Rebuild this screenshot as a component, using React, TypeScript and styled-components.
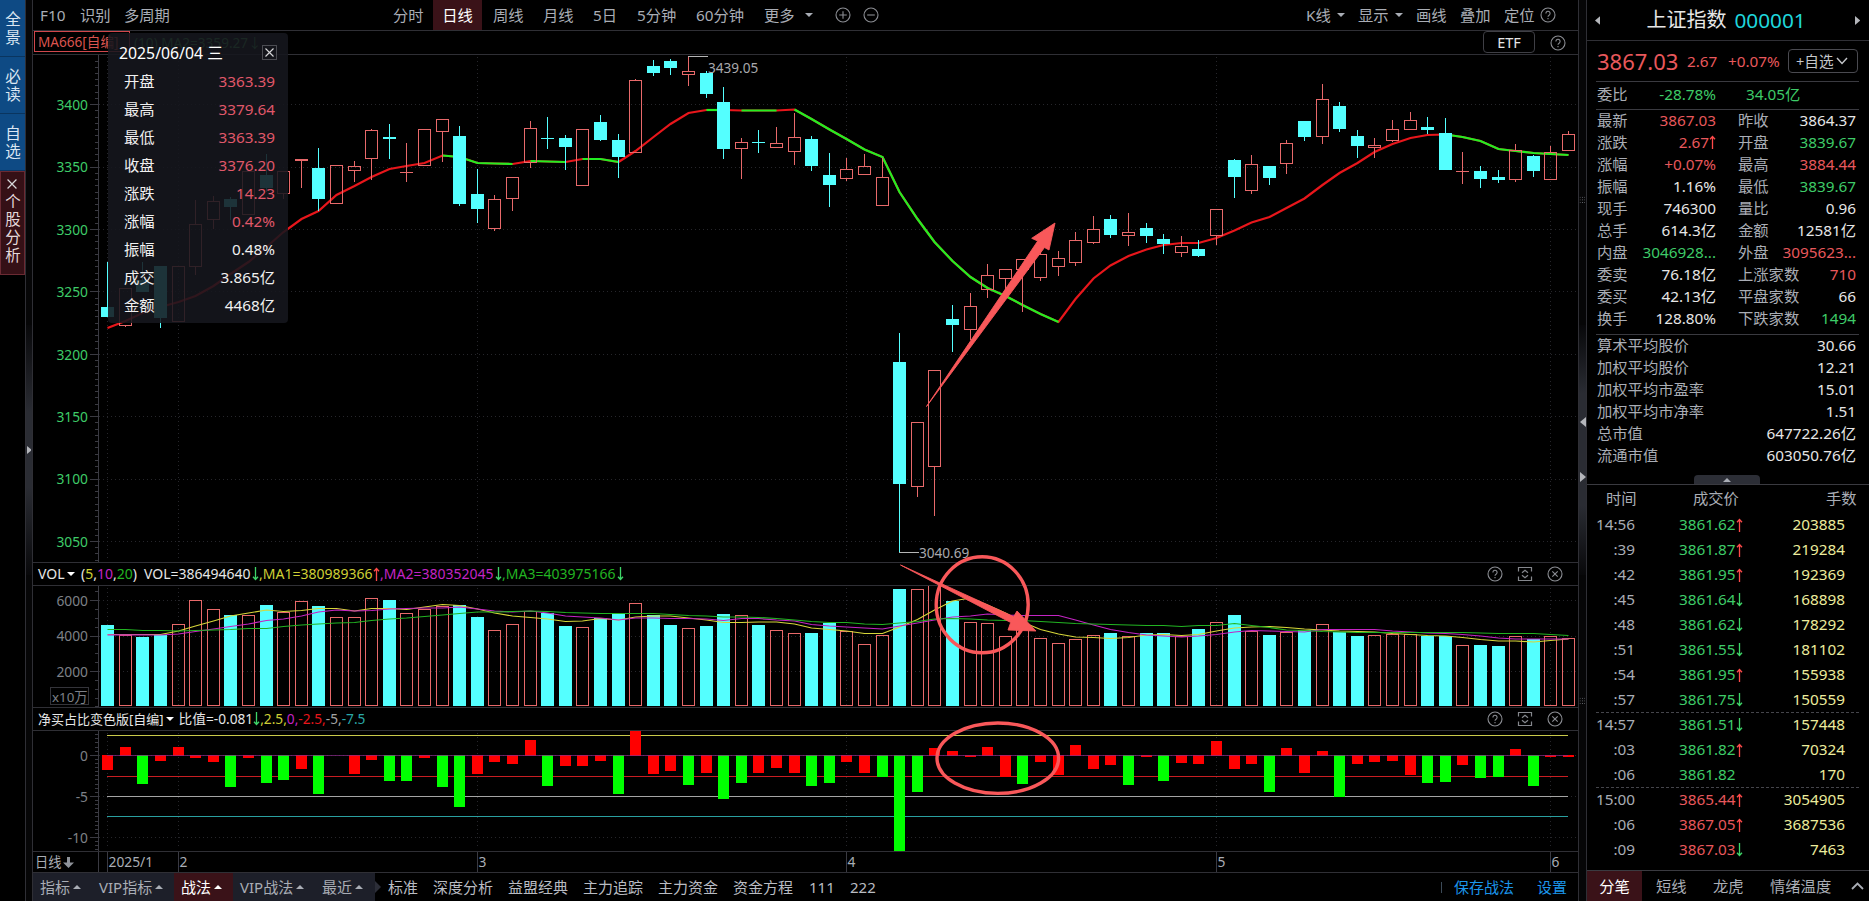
import type { ReactNode } from 'react';
import styled, { createGlobalStyle, css } from 'styled-components';

const colors = {
  line: '#2f2f35',
  muted: '#a9adb5',
  text: '#e6e6e6',
  red: '#e8585c',
  green: '#3ecb68',
  cyan: '#54ffff',
  candleRed: '#e8696a',
  tick: '#3a3a42',
  dot: '#26262b',
  yellow: '#ecec9c',
  activeTab: '#3a1218',
  mark: '#f9585a',
};

const GlobalStyle = createGlobalStyle`
  * {
    box-sizing: border-box;
  }

  body {
    margin: 0;
    background: #000;
    color: ${colors.text};
    font-family: 'Noto Sans', 'Noto Sans CJK SC', sans-serif;
    font-size: 15.3px;
    line-height: 20px;
    overflow: hidden;
  }

  svg {
    display: block;
    flex: none;
  }
`;

type Bar = [top: number, bottom: number, high: number, low: number, up: 0 | 1];

// body top, body bottom, wick top, wick bottom, rising
const candles: Bar[] = [
  [307, 317, 262, 317, 0], [288, 326, 288, 327, 1], [280, 292, 262, 292, 0], [266, 318, 266, 328, 0],
  [266, 322, 266, 322, 1], [224, 267, 200, 275, 1], [201, 220, 196, 229, 1], [199, 207, 197, 220, 0],
  [171, 215, 171, 215, 1], [175, 188, 154, 192, 0], [171, 194, 171, 199, 1], [159, 161, 159, 188, 1],
  [168, 199, 148, 211, 0], [165, 204, 165, 204, 1], [166, 171, 161, 182, 1], [130, 159, 129, 180, 1],
  [137, 139, 124, 159, 0], [172, 173, 143, 182, 1], [129, 166, 129, 166, 1], [119, 132, 119, 162, 1],
  [136, 204, 126, 206, 0], [194, 209, 169, 223, 0], [199, 229, 195, 231, 1], [177, 199, 177, 211, 1],
  [128, 163, 121, 168, 1], [138, 139, 117, 149, 0], [138, 147, 135, 170, 0], [129, 186, 129, 186, 1],
  [122, 140, 115, 141, 0], [140, 157, 134, 178, 0], [80, 153, 79, 153, 1], [66, 73, 60, 76, 0],
  [61, 68, 59, 75, 0], [71, 75, 56, 86, 1], [73, 94, 71, 98, 0], [102, 149, 87, 159, 0],
  [142, 149, 138, 179, 1], [142, 143, 130, 153, 0], [143, 148, 127, 148, 1], [137, 152, 113, 165, 1],
  [139, 166, 136, 171, 0], [175, 185, 153, 207, 0], [169, 179, 158, 181, 1], [166, 175, 154, 175, 1],
  [177, 206, 158, 206, 1], [362, 484, 333, 552, 0], [422, 487, 422, 497, 1], [370, 467, 370, 516, 1],
  [319, 325, 305, 352, 0], [306, 330, 293, 340, 1], [275, 290, 264, 298, 1], [269, 279, 269, 291, 1],
  [259, 270, 259, 312, 1], [254, 278, 247, 281, 1], [258, 267, 251, 276, 1], [240, 263, 232, 266, 1],
  [229, 243, 216, 244, 1], [219, 235, 215, 238, 0], [232, 236, 213, 246, 1], [228, 236, 223, 243, 0],
  [239, 244, 234, 254, 0], [246, 253, 236, 257, 1], [249, 256, 240, 257, 0], [209, 236, 209, 245, 1],
  [160, 177, 159, 198, 0], [164, 191, 155, 194, 1], [166, 178, 166, 185, 0], [143, 164, 140, 174, 1],
  [121, 137, 121, 141, 0], [99, 137, 84, 144, 1], [106, 129, 102, 132, 0], [136, 146, 130, 158, 0],
  [145, 148, 138, 158, 1], [129, 141, 120, 142, 1], [120, 130, 112, 130, 1], [127, 130, 117, 134, 0],
  [133, 170, 118, 170, 0], [171, 172, 152, 184, 1], [171, 179, 166, 188, 0], [177, 180, 170, 183, 0],
  [150, 180, 144, 182, 1], [156, 171, 155, 177, 0], [152, 180, 146, 180, 1], [134, 151, 131, 151, 1],
];

const maLine = [
  328, 321, 313, 307, 302, 296, 286, 274, 262, 247, 232, 219, 211, 195, 186, 177, 169, 166, 163, 155.5,
  157, 163, 163.5, 164, 161, 161.5, 162, 159, 159, 162, 151, 137, 124, 113, 110, 110, 110.5, 110.5, 110.5, 109.5,
  119, 129.5, 139, 149.5, 157, 192, 219, 242, 261, 277, 288, 296, 305, 314, 322, 299, 278.5, 265.5, 256, 249.5,
  245, 243, 243, 238, 230.5, 222.5, 217, 208, 198.5, 185, 173, 163, 152, 144, 138, 135, 134.5, 137, 141, 149,
  151, 153, 154, 155,
];

// [from, to] index ranges where the average is falling
const maFalling: [number, number][] = [
  [19, 23], [24, 26], [27, 29], [34, 35], [36, 38], [39, 54], [76, 83],
];

const volumeTops = [
  625, 635, 637, 635, 624, 600, 609, 615, 615, 605, 612, 601, 606, 617, 617, 598, 600, 613, 609, 606,
  605, 617, 630, 624, 611, 613, 626, 627, 618, 613, 603, 615, 625, 628, 626, 614, 615, 625, 630, 633,
  633, 623, 631, 644, 635, 589, 589, 585, 601, 622, 623, 636, 628, 638, 643, 639, 635, 633, 636, 633,
  633, 636, 629, 622, 615, 631, 635, 632, 630, 624, 632, 636, 635, 634, 634, 636, 636, 645, 645, 646,
  636, 639, 636, 638,
];

const volMa5 = [
  634.5, 634.5, 634.5, 634.5, 631, 626, 621, 616, 613, 610, 611.5, 610.5, 608.5, 608.5, 611, 608.5, 608.5, 609.5, 607, 604.5,
  605.5, 609, 613, 616, 617.5, 619, 621.5, 621, 618.5, 620, 617, 616, 616, 618, 620, 622.5, 622.5, 622, 622, 624,
  628, 629.5, 631, 633.5, 633.5, 627, 619.5, 610, 601, 598, 605, 613, 622, 629.5, 634, 637, 637.5, 638.5, 637.5, 635,
  634.5, 635.5, 634.5, 631, 628, 627, 626.5, 627.5, 629, 630, 631, 631.5, 632, 633.5, 634.5, 635.5, 636, 637.5, 639.5, 641,
  641, 642, 640.5, 639,
];

const volMa10 = [
  634.8, 634.8, 634.8, 635, 634, 631.5, 629, 626.5, 624, 620.5, 619, 616, 612, 610, 611, 610.5, 609, 608.5, 608, 608,
  607, 609, 611, 612, 611, 613, 616, 617, 618, 620, 618, 618, 618.5, 618.5, 619, 620.5, 618.5, 618.5, 620, 621,
  624.5, 626, 627, 628, 629, 626, 623, 620, 617, 616, 614, 615, 615.5, 615.5, 615.5, 620, 625, 629.5, 632.5, 635,
  636, 637, 636, 634.5, 632, 630.5, 631, 631.5, 632, 629.5, 629.5, 629.5, 629.5, 631, 632, 633, 633.5, 634.5, 636, 638,
  639, 639, 639, 639,
];

const volMa20 = [
  629.5, 629.5, 630.5, 630.5, 631, 630.5, 630, 629.5, 628.5, 628.5, 626.5, 625, 624, 623, 622.5, 620.5, 619, 618, 616.5, 615,
  613.5, 612, 612, 611.5, 611, 611.5, 612.5, 613, 613.5, 613.5, 613.5, 613.5, 614.5, 615.5, 616, 617, 617, 617.5, 618.5, 620,
  621.5, 622.5, 622.5, 624, 624.5, 623, 621.5, 619, 618.5, 619, 620, 620.5, 620.5, 621.5, 622.5, 623.5, 624, 624.5, 625, 625.5,
  625.5, 626.5, 625.5, 625.5, 623.5, 625.5, 627.5, 630, 630.5, 631.5, 632, 632.5, 632.5, 632.5, 632.5, 632.5, 632.5, 632.5, 633, 633.5,
  633.5, 633.5, 634.5, 635.5,
];

const ratioEnds = [
  770, 747, 784, 761, 747, 758, 762, 787, 758, 783, 780, 769, 794, 755, 774, 760, 781, 781, 758, 787,
  807, 774, 762, 764, 740, 786, 766, 766, 761, 794, 730, 774, 771, 785, 773, 799, 783, 773, 768, 773,
  786, 783, 762, 773, 777, 851, 792, 748, 751, 757, 747, 777, 784, 762, 775, 745, 769, 765, 785, 757,
  781, 763, 764, 741, 769, 764, 792, 748, 773, 751, 797, 764, 762, 761, 775, 783, 782, 765, 778, 777,
  749, 786, 757, 757,
];

const ratioGreen = new Set([
  2, 7, 9, 10, 12, 16, 17, 19, 20, 25, 29, 33, 35, 36, 40, 41, 44, 45, 46, 52, 58, 60, 66, 70, 75, 76, 78, 79, 81,
]);

const months = [
  { index: 0, label: '2025/1' },
  { index: 4, label: '2' },
  { index: 21, label: '3' },
  { index: 42, label: '4' },
  { index: 63, label: '5' },
  { index: 82, label: '6' },
];

const CHART_LEFT = 33;
const CHART_WIDTH = 1545;
const AXIS_X = 98;

const barX = (i: number) => Math.floor(107.65 + 17.6 * i);

const toPoints = (ys: number[], from = 0, to = ys.length - 1) =>
  ys
    .slice(from, to + 1)
    .map((y, k) => `${barX(from + k) + 0.5},${y}`)
    .join(' ');

const Screen = styled.div`
  position: relative;
  display: flex;
  width: 1869px;
  height: 901px;
  overflow: hidden;
  background: #000;
`;

const SideNav = styled.nav`
  width: 25px;
  flex: none;
`;

const SideItem = styled.div<{ $danger?: boolean }>`
  display: flex;
  flex-direction: column;
  align-items: center;
  justify-content: center;
  gap: 4px;
  height: 57px;
  padding: 2px 2px 0 0;
  font-size: 15.5px;
  background: #0e4a84;
  border-bottom: 1px solid #0a355f;
  color: #dbe6f2;

  ${({ $danger }) =>
    $danger &&
    css`
      height: 104px;
      padding: 0 2px 2px 0;
      background: #351016;
      border: 1px solid #6b2a33;
      color: #e4d8da;
    `}
`;

const VerticalText = styled.span`
  writing-mode: vertical-rl;
  text-orientation: upright;
  letter-spacing: 2.5px;
  line-height: 23px;
  white-space: nowrap;
`;

const Splitter = styled.div<{ $right?: boolean }>`
  display: flex;
  flex-direction: column;
  align-items: center;
  width: ${({ $right }) => ($right ? 9 : 8)}px;
  flex: none;
  border-left: 1px solid ${colors.line};
  border-right: 1px solid ${colors.line};
  background: #060607;
`;

const SplitGrip = styled.div<{ $height: number; $mt?: number; $pt: number; $fade: 'up' | 'down' | 'both' }>`
  width: 100%;
  height: ${({ $height }) => $height}px;
  margin-top: ${({ $mt = 0 }) => $mt}px;
  padding-top: ${({ $pt }) => $pt}px;
  background: ${({ $fade }) => {
    if ($fade === 'both') return 'linear-gradient(#08080a, #2a2c33 35%, #2a2c33 65%, #08080a)';
    return $fade === 'up' ? 'linear-gradient(#08080a, #2a2c33 55%)' : 'linear-gradient(#2a2c33 45%, #08080a)';
  }};

  svg {
    margin: 0 auto;
  }
`;

const DragDots = styled.i<{ $mt: number; $mb: number }>`
  width: 7px;
  height: 8px;
  flex: none;
  margin: ${({ $mt }) => $mt}px 0 ${({ $mb }) => $mb}px;
  background: radial-gradient(#6a6c72 35%, transparent 45%) 0 0 / 2.3px 2.6px;
`;

const ChartColumn = styled.main`
  display: flex;
  flex-direction: column;
  width: ${CHART_WIDTH}px;
  flex: none;
`;

const Toolbar = styled.div`
  display: flex;
  align-items: center;
  height: 31px;
  border-bottom: 1px solid ${colors.line};
  color: ${colors.muted};
`;

const Item = styled.span<{ $ml?: number; $w?: number; $color?: string }>`
  flex: none;
  margin-left: ${({ $ml = 0 }) => $ml}px;
  width: ${({ $w }) => ($w ? `${$w}px` : 'auto')};
  color: ${({ $color }) => $color ?? 'inherit'};
  white-space: nowrap;
`;

const PeriodTab = styled.span`
  width: 49px;
  height: 30px;
  margin-left: 10px;
  flex: none;
  line-height: 30px;
  text-align: center;
  background: ${colors.activeTab};
  color: #fff;
`;

const Caret = styled.i<{ $up?: boolean; $ml?: number; $color?: string }>`
  width: 0;
  height: 0;
  flex: none;
  margin-left: ${({ $ml = 0 }) => $ml}px;
  border: 4px solid transparent;
  ${({ $up, $color = '#a9adb5' }) =>
    $up
      ? `border-top: 0; border-bottom-color: ${$color};`
      : `border-bottom: 0; border-top-color: ${$color};`}
`;

const IconSlot = styled.span<{ $ml: number }>`
  display: flex;
  flex: none;
  margin-left: ${({ $ml }) => $ml}px;
`;

const IndicatorBar = styled.div`
  display: flex;
  align-items: center;
  height: 24px;
  border-bottom: 1px solid ${colors.line};
  font-size: 13.6px;
`;

const IndicatorName = styled.div`
  width: 96px;
  height: 21px;
  margin: 0 0 2px 1px;
  padding-left: 3px;
  border: 1px solid #d0474c;
  color: #d9544f;
  line-height: 20px;
  flex: none;
  white-space: nowrap;
`;

const EtfButton = styled.button`
  width: 52px;
  height: 22px;
  margin-left: auto;
  margin-bottom: 1px;
  padding: 0;
  border: 1px solid #3f3f45;
  border-radius: 4px;
  background: #000;
  color: #e6e6e6;
  font: inherit;
  font-size: 14.5px;
  line-height: 18px;
`;

const PanelHeader = styled.div<{ $size?: number }>`
  display: flex;
  align-items: center;
  height: 23px;
  padding-left: 5px;
  border-bottom: 1px solid ${colors.line};
  font-size: ${({ $size = 14 }) => $size}px;
`;

const ScriptName = styled.span`
  flex: none;
  font-size: 13px;
  white-space: nowrap;
`;

const PanelIcons = styled.div`
  display: flex;
  gap: 14px;
  margin: 0 15px 0 auto;
`;

const Plot = styled.div`
  border-bottom: 1px solid ${colors.line};
`;

const BottomBar = styled.div`
  display: flex;
  align-items: center;
  height: 28px;
  font-size: 15px;
  color: #b9bcc2;
`;

const MenuGroup = styled.div`
  display: flex;
  align-items: center;
  width: 342px;
  height: 100%;
  flex: none;
  background: #1d1f29;
`;

const MenuTab = styled.div<{ $w: number; $active?: boolean }>`
  display: flex;
  align-items: center;
  height: 100%;
  width: ${({ $w }) => $w}px;
  padding-left: 7px;
  gap: 3px;
  flex: none;
  white-space: nowrap;
  color: ${({ $active }) => ($active ? '#fff' : colors.muted)};
  background: ${({ $active }) => ($active ? colors.activeTab : 'transparent')};
`;

const Divider = styled.i`
  width: 1px;
  height: 11px;
  margin-left: auto;
  background: #3c4a58;
`;

const QuotePanel = styled.aside`
  display: flex;
  flex-direction: column;
  flex: 1;
  min-width: 0;
`;

const QuoteTitle = styled.div`
  display: flex;
  align-items: center;
  height: 41px;
  padding: 0 9px 0 8px;
  border-bottom: 1px solid ${colors.line};
  font-size: 20px;
`;

const QuoteName = styled.span`
  margin-left: 46px;
  width: 88px;
  color: #e6e6e6;
  white-space: nowrap;
`;

const QuoteCode = styled.span`
  flex: 1;
  margin-top: -1px;
  font-size: 20.8px;
  color: #1fd6dc;
`;

const Section = styled.div<{ $h: number; $pt?: number; $last?: boolean }>`
  height: ${({ $h }) => $h}px;
  margin: 0 10px 0 9px;
  padding-top: ${({ $pt = 0 }) => $pt}px;
  border-bottom: ${({ $last }) => ($last ? 0 : 1)}px solid #3a3a40;
`;

const PriceRow = styled(Section)`
  display: flex;
  align-items: center;
  padding-left: 1px;
  color: ${colors.red};
`;

const LastPrice = styled.span`
  width: 90px;
  font-size: 22px;
`;

const AddButton = styled.button`
  display: flex;
  align-items: center;
  gap: 2px;
  width: 70px;
  height: 24px;
  margin-left: auto;
  margin-right: 1px;
  padding: 0 0 0 7px;
  border: 1px solid #4a4a50;
  border-radius: 4px;
  background: #000;
  color: #c4c6ca;
  font: inherit;
  font-size: 14.6px;
  white-space: nowrap;
`;

const StatRow = styled.div`
  display: grid;
  grid-template-columns: 119px 22px 118px;
  height: 22px;
  padding-left: 1px;
  line-height: 20px;
`;

const StatCell = styled.div<{ $color?: string }>`
  display: flex;
  justify-content: space-between;
  white-space: nowrap;
  color: ${({ $color }) => $color ?? colors.text};
`;

const Value = styled.span`
  display: flex;
  align-items: center;
  height: 20px;
`;

const Label = styled.span`
  color: ${colors.muted};
`;

const SummaryRow = styled.div`
  display: flex;
  justify-content: space-between;
  width: 260px;
  height: 22px;
  padding-left: 1px;
  line-height: 20px;
`;

const Collapse = styled.div`
  display: flex;
  justify-content: center;
  height: 18px;
  padding: 8px 0 0;
  border-bottom: 1px solid #3a3a40;
`;

const CollapseTab = styled.div`
  display: flex;
  align-items: center;
  justify-content: center;
  width: 66px;
  margin-left: -2px;
  border-radius: 4px 4px 0 0;
  background: #2c2e36;
`;

const TickHead = styled.div`
  display: flex;
  height: 28px;
  line-height: 26px;
  padding-right: 14px;
  color: ${colors.muted};
`;

const TickRow = styled.div<{ $dashed?: boolean }>`
  display: grid;
  grid-template-columns: 39px 44px 57px 10px 99px;
  height: 25px;
  line-height: 22px;
  margin: 0 10px 0 9px;
  white-space: nowrap;
  border-bottom: 1px ${({ $dashed }) => ($dashed ? 'dashed #45454b' : 'solid transparent')};
`;

const TickCell = styled.span<{ $color: string; $right?: boolean }>`
  color: ${({ $color }) => $color};
  text-align: ${({ $right }) => ($right ? 'right' : 'left')};
`;

const ArrowCell = styled.span`
  display: flex;
  align-items: center;
`;

const QuoteTabs = styled.div`
  display: flex;
  align-items: center;
  height: 31px;
  margin-top: auto;
  border-top: 1px solid #3a3a40;
  color: ${colors.muted};
`;

const ActiveQuoteTab = styled.span`
  width: 55px;
  height: 100%;
  line-height: 30px;
  text-align: center;
  background: ${colors.activeTab};
  color: #fff;
`;

const Tooltip = styled.div`
  position: absolute;
  left: 108px;
  top: 33px;
  width: 180px;
  height: 290px;
  padding: 6px 13px 0 11px;
  border-radius: 4px;
  background: rgba(22, 23, 30, 0.88);
  color: #f0f0f0;
`;

const TooltipTitle = styled.div`
  display: flex;
  align-items: center;
  justify-content: space-between;
  height: 28px;
  margin-right: -2px;
  padding-bottom: 1px;
  font-size: 15.8px;
  color: #fff;
`;

const TooltipClose = styled.span`
  display: flex;
  align-items: center;
  justify-content: center;
  width: 15px;
  height: 15px;
  border: 1px solid #4b4c52;
`;

const TooltipRow = styled.div<{ $color?: string }>`
  display: flex;
  justify-content: space-between;
  height: 28px;
  padding-left: 5px;
  line-height: 28px;
  color: ${({ $color }) => $color ?? '#f0f0f0'};
`;

const TooltipLabel = styled.span`
  color: #f0f0f0;
`;

const Marks = styled.svg`
  position: absolute;
  left: 0;
  top: 0;
  pointer-events: none;
`;

const HelpIcon = () => (
  <svg width="16" height="16" viewBox="0 0 16 16" fill="none" stroke="#8b8d93" strokeWidth="1.1">
    <circle cx="8" cy="8" r="7" />
    <path d="M5.9 6.4a2.1 2.1 0 1 1 3.2 1.8c-.8.5-1.1.8-1.1 1.6M8 11v1.3" />
  </svg>
);

const RoundIcon = ({ d }: { d: string }) => (
  <svg width="16" height="16" viewBox="0 0 16 16" fill="none" stroke="#8b8d93" strokeWidth="1.1">
    <circle cx="8" cy="8" r="7" />
    <path d={d} />
  </svg>
);

const ResizeIcon = () => (
  <svg width="16" height="16" viewBox="0 0 16 16" fill="none" stroke="#85878d" strokeWidth="1.2">
    <path d="M1.5 5.5v-4h13v4M1.5 10.5v4h13v-4" />
    <path d="M5 6.8 8 4.3l3 2.5M5 9.2l3 2.5 3-2.5" />
  </svg>
);

const CrossIcon = ({ size = 9, color = '#d8d8da' }: { size?: number; color?: string }) => (
  <svg width={size} height={size} viewBox="0 0 9 9" stroke={color} strokeWidth="1.1">
    <path d="M.5.5l8 8M8.5.5l-8 8" />
  </svg>
);

const SideArrow = ({ flip, size = 8 }: { flip?: boolean; size?: number }) => (
  <svg width={size * 0.6} height={size} viewBox="0 0 6 10" fill="#b4b6bb">
    <path d={flip ? 'M6 0v10L0 5z' : 'M0 0v10l6-5z'} />
  </svg>
);

interface CanvasProps {
  top: number;
  height: number;
  children: ReactNode;
}

// Every panel shares the same x scale, shifted to its own vertical band
const Canvas = ({ top, height, children }: CanvasProps) => (
  <svg
    width={CHART_WIDTH}
    height={height}
    viewBox={`${CHART_LEFT} ${top} ${CHART_WIDTH} ${height}`}
    fontFamily="'Noto Sans', 'Noto Sans CJK SC', sans-serif"
    fontSize="13.8"
  >
    {children}
  </svg>
);

interface AxisProps {
  top: number;
  height: number;
  labels: { y: number; text: string }[];
  step: number;
  color: string;
}

const Axis = ({ top, height, labels, step, color }: AxisProps) => {
  const minor: number[] = [];
  for (let y = labels[0].y - step; y > top + 2; y -= step) minor.push(y);
  for (let y = labels[0].y; y < top + height; y += step) minor.push(y);

  return (
    <g>
      <g shapeRendering="crispEdges" stroke={colors.tick}>
        <path d={`M${AXIS_X + 0.5} ${top}v${height}`} />
        {minor.map((y) => (
          <path key={y} d={`M95 ${Math.floor(y) + 0.5}h3`} />
        ))}
        {labels.map(({ y }) => (
          <path key={y} d={`M90 ${Math.floor(y) + 0.5}h8`} />
        ))}
      </g>
      <g shapeRendering="crispEdges" stroke={colors.dot} strokeDasharray="1 3">
        {labels.map(({ y }) => (
          <path key={y} d={`M99 ${Math.floor(y) + 0.5}H1576`} />
        ))}
        {months.map(({ index }) => (
          <path key={index} d={`M${barX(index) + 0.5} ${top + 2}v${height - 4}`} />
        ))}
      </g>
      {labels.map(({ y, text }) => (
        <text key={text} x="88" y={y + 5.3} textAnchor="end" fill={color}>
          {text}
        </text>
      ))}
    </g>
  );
};

const priceLabels = [3400, 3350, 3300, 3250, 3200, 3150, 3100, 3050].map((value, i) => ({
  y: 104.7 + i * 62.4,
  text: String(value),
}));

const PriceChart = () => (
  <Canvas top={55} height={507}>
    <Axis top={55} height={507} labels={priceLabels} step={6.24} color={colors.green} />
    <g fill="none" strokeWidth="2.2">
      <polyline points={toPoints(maLine)} stroke="#e8161b" />
      {maFalling.map(([from, to]) => (
        <polyline key={from} points={toPoints(maLine, from, to)} stroke="#22ee22" />
      ))}
    </g>
    <g shapeRendering="crispEdges">
      {candles.map(([top, bottom, high, low, up], i) => {
        const x = barX(i);
        const color = up ? colors.candleRed : colors.cyan;
        return (
          <g key={i} fill={color}>
            {top > high && <rect x={x} y={high} width="1" height={top - high} />}
            {low > bottom && <rect x={x} y={bottom} width="1" height={low - bottom} />}
            {up && bottom - top > 2 ? (
              <rect x={x - 5.5} y={top + 0.5} width="12" height={bottom - top - 1} fill="none" stroke={color} />
            ) : (
              <rect x={x - 6} y={top} width="13" height={bottom - top} />
            )}
          </g>
        );
      })}
      <path d="M688 56.5h20M899 552.5h20" stroke="#b5b5b5" />
    </g>
    <g fill="#a8a8ac" fontSize="13.6">
      <text x="708" y="73.2">3439.05</text>
      <text x="919" y="558">3040.69</text>
    </g>
  </Canvas>
);

const volumeLabels = [
  { y: 600.7, text: '6000' },
  { y: 636, text: '4000' },
  { y: 671.5, text: '2000' },
];

const VolumeChart = () => (
  <Canvas top={586} height={121}>
    <Axis top={586} height={121} labels={volumeLabels} step={8.85} color="#7d8087" />
    <rect x="50.5" y="687.5" width="38" height="17" fill="none" stroke="#34343a" />
    <text x="52" y="701.5" fill="#7d8087" fontSize="13.3">x10万</text>
    <g shapeRendering="crispEdges">
      {volumeTops.map((top, i) =>
        candles[i][4] ? (
          <rect key={i} x={barX(i) - 5.5} y={top + 0.5} width="12" height={705 - top} fill="none" stroke={colors.candleRed} />
        ) : (
          <rect key={i} x={barX(i) - 6} y={top} width="13" height={706 - top} fill={colors.cyan} />
        ),
      )}
    </g>
    <g fill="none" strokeWidth="1.2">
      <polyline points={toPoints(volMa5)} stroke="#d6d639" />
      <polyline points={toPoints(volMa10)} stroke="#c424c4" />
      <polyline points={toPoints(volMa20)} stroke="#22b422" />
    </g>
  </Canvas>
);

const ratioLabels = [
  { y: 755.3, text: '0' },
  { y: 796.8, text: '-5' },
  { y: 837.5, text: '-10' },
];

const RatioChart = () => (
  <Canvas top={731} height={120}>
    <Axis top={731} height={120} labels={ratioLabels} step={4.11} color="#7d8087" />
    <g shapeRendering="crispEdges">
      <path d="M107 735.5H1568" stroke="#c9c94a" />
      <path d="M107 776.5H1568" stroke="#c81e22" />
      <path d="M107 796.5H1568" stroke="#a4a4a4" />
      <path d="M107 816.5H1568" stroke="#2a9f9f" />
      {ratioEnds.map((end, i) => (
        <rect
          key={i}
          x={barX(i) - 5}
          y={Math.min(end, 755)}
          width="11"
          height={end < 755 ? 756 - end : end - 755}
          fill={ratioGreen.has(i) ? '#00ff00' : '#ff0000'}
        />
      ))}
      <path d="M107 755.5H1568" stroke="#8c2c8c" strokeOpacity="0.7" />
    </g>
  </Canvas>
);

const DateAxis = () => (
  <Canvas top={852} height={20}>
    <path d={`M${AXIS_X + 0.5} 852v20`} stroke={colors.tick} />
    <text x="35" y="867" fill={colors.muted} fontSize="13.2">日线</text>
    <path d="M67 857h3v5.5h4l-5.5 5.5-5.5-5.5h4z" fill="#8f9299" />
    {months.map(({ index, label }) => (
      <g key={index}>
        <path d={`M${barX(index) + 0.5} 852v20`} stroke={colors.tick} />
        <text x={barX(index) + 1.5} y="867" fill={colors.muted} fontSize="13.8">
          {label}
        </text>
      </g>
    ))}
  </Canvas>
);

const statRows: [string, string, string, string, string, string][] = [
  ['最新', '3867.03', colors.red, '昨收', '3864.37', colors.text],
  ['涨跌', '2.67↑', colors.red, '开盘', '3839.67', colors.green],
  ['涨幅', '+0.07%', colors.red, '最高', '3884.44', colors.red],
  ['振幅', '1.16%', colors.text, '最低', '3839.67', colors.green],
  ['现手', '746300', colors.text, '量比', '0.96', colors.text],
  ['总手', '614.3亿', colors.text, '金额', '12581亿', colors.text],
  ['内盘', '3046928...', colors.green, '外盘', '3095623...', colors.red],
  ['委卖', '76.18亿', colors.text, '上涨家数', '710', colors.red],
  ['委买', '42.13亿', colors.text, '平盘家数', '66', colors.text],
  ['换手', '128.80%', colors.text, '下跌家数', '1494', colors.green],
];

const summaryRows = [
  ['算术平均股价', '30.66'],
  ['加权平均股价', '12.21'],
  ['加权平均市盈率', '15.01'],
  ['加权平均市净率', '1.51'],
  ['总市值', '647722.26亿'],
  ['流通市值', '603050.76亿'],
];

const ticks: [string, string, string, string][] = [
  ['14:56', '3861.62', '↑', '203885'],
  [':39', '3861.87', '↑', '219284'],
  [':42', '3861.95', '↑', '192369'],
  [':45', '3861.64', '↓', '168898'],
  [':48', '3861.62', '↓', '178292'],
  [':51', '3861.55', '↓', '181102'],
  [':54', '3861.95', '↑', '155938'],
  [':57', '3861.75', '↓', '150559'],
  ['14:57', '3861.51', '↓', '157448'],
  [':03', '3861.82', '↑', '70324'],
  [':06', '3861.82', '', '170'],
  ['15:00', '3865.44', '↑', '3054905'],
  [':06', '3867.05', '↑', '3687536'],
  [':09', '3867.03', '↓', '7463'],
];

const dayDetail: [string, string, boolean][] = [
  ['开盘', '3363.39', true],
  ['最高', '3379.64', true],
  ['最低', '3363.39', true],
  ['收盘', '3376.20', true],
  ['涨跌', '14.23', true],
  ['涨幅', '0.42%', true],
  ['振幅', '0.48%', false],
  ['成交', '3.865亿', false],
  ['金额', '4468亿', false],
];

const Arrow = ({ dir }: { dir: string }) => (
  <svg width="7" height="14" viewBox="0 0 7 14" fill="none" stroke={dir === '↑' ? '#ff4a4a' : '#3ed468'} strokeWidth="1.3">
    <path d={dir === '↑' ? 'M3.5 14V1.5M1 4.2l2.5-2.7L6 4.2' : 'M3.5 0v12.5M1 9.8l2.5 2.7L6 9.8'} />
  </svg>
);

const HeaderIcons = () => (
  <PanelIcons>
    <HelpIcon />
    <ResizeIcon />
    <RoundIcon d="M5.3 5.3l5.4 5.4M10.7 5.3l-5.4 5.4" />
  </PanelIcons>
);

const Quote = () => (
  <QuotePanel>
    <QuoteTitle>
      <SideArrow flip size={9} />
      <QuoteName>上证指数</QuoteName>
      <QuoteCode>000001</QuoteCode>
      <SideArrow size={9} />
    </QuoteTitle>
    <PriceRow $h={41}>
      <LastPrice>3867.03</LastPrice>
      <Item $w={41}>2.67</Item>
      <Item>+0.07%</Item>
      <AddButton>
        +自选
        <svg width="12" height="8" viewBox="0 0 12 8" fill="none" stroke="#c4c6ca" strokeWidth="1.4">
          <path d="M1 1l5 5.5L11 1" />
        </svg>
      </AddButton>
    </PriceRow>
    <Section $h={28} $pt={2}>
      <StatRow>
        <StatCell $color={colors.green}>
          <Label>委比</Label>-28.78%
        </StatCell>
        <span />
        <StatCell $color={colors.green}>
          <Item $ml={8}>34.05亿</Item>
        </StatCell>
      </StatRow>
    </Section>
    <Section $h={225}>
      {statRows.map(([label, value, color, label2, value2, color2]) => (
        <StatRow key={label}>
          <StatCell $color={color}>
            <Label>{label}</Label>
            <Value>
              {value.replace('↑', '')}
              {value.endsWith('↑') && <Arrow dir="↑" />}
            </Value>
          </StatCell>
          <span />
          <StatCell $color={color2}>
            <Label>{label2}</Label>
            <Value>{value2}</Value>
          </StatCell>
        </StatRow>
      ))}
    </Section>
    <Section $h={132} $last>
      {summaryRows.map(([label, value]) => (
        <SummaryRow key={label}>
          <Label>{label}</Label>
          {value}
        </SummaryRow>
      ))}
    </Section>
    <Collapse>
      <CollapseTab>
        <Caret $up />
      </CollapseTab>
    </Collapse>
    <TickHead>
      <Item $ml={19} $w={87}>时间</Item>
      <Item>成交价</Item>
      <Item $ml={87}>手数</Item>
    </TickHead>
    {ticks.map(([time, price, dir, lots], i) => (
      <TickRow key={i} $dashed={i === 7 || i === 10}>
        <TickCell $right $color={colors.muted}>{time}</TickCell>
        <span />
        <TickCell $color={i > 10 ? colors.red : colors.green}>{price}</TickCell>
        <ArrowCell>{dir && <Arrow dir={dir} />}</ArrowCell>
        <TickCell $right $color={colors.yellow}>{lots}</TickCell>
      </TickRow>
    ))}
    <QuoteTabs>
      <ActiveQuoteTab>分笔</ActiveQuoteTab>
      <Item $ml={14} $w={57}>短线</Item>
      <Item $w={57}>龙虎</Item>
      <Item $w={81}>情绪温度</Item>
      <svg width="13" height="8" viewBox="0 0 13 8" fill="none" stroke={colors.muted} strokeWidth="1.8">
        <path d="M1 7l5.5-5.5L12 7" />
      </svg>
    </QuoteTabs>
  </QuotePanel>
);

export default function App() {
  return (
    <Screen>
      <GlobalStyle />
      <SideNav>
        <SideItem><VerticalText>全景</VerticalText></SideItem>
        <SideItem><VerticalText>必读</VerticalText></SideItem>
        <SideItem><VerticalText>自选</VerticalText></SideItem>
        <SideItem $danger>
          <CrossIcon size={10} />
          <VerticalText>个股分析</VerticalText>
        </SideItem>
      </SideNav>
      <Splitter>
        <SplitGrip $height={250} $mt={325} $pt={121} $fade="both">
          <SideArrow />
        </SplitGrip>
      </Splitter>
      <ChartColumn>
        <Toolbar>
          <Item $ml={7} $w={40}>F10</Item>
          <Item $w={44}>识别</Item>
          <Item $w={46}>多周期</Item>
          <Item $ml={223} $w={30}>分时</Item>
          <PeriodTab>日线</PeriodTab>
          <Item $ml={11} $w={50}>周线</Item>
          <Item $w={50}>月线</Item>
          <Item $w={44}>5日</Item>
          <Item $w={59}>5分钟</Item>
          <Item $w={68}>60分钟</Item>
          <Item $w={30}>更多</Item>
          <Caret $ml={11} />
          <IconSlot $ml={22}><RoundIcon d="M8 4.2v7.6M4.2 8h7.6" /></IconSlot>
          <IconSlot $ml={12}><RoundIcon d="M4.2 8h7.6" /></IconSlot>
          <Item $ml={427} $w={25}>K线</Item>
          <Caret $ml={6} />
          <Item $ml={13} $w={31}>显示</Item>
          <Caret $ml={6} />
          <Item $ml={13} $w={44}>画线</Item>
          <Item $w={44}>叠加</Item>
          <Item $w={31}>定位</Item>
          <IconSlot $ml={5}><HelpIcon /></IconSlot>
        </Toolbar>
        <IndicatorBar>
          <IndicatorName>MA666[自编]</IndicatorName>
          <Item $ml={4} $color="#3a9a4a">(10) MA2=3359.27↓</Item>
          <EtfButton>ETF</EtfButton>
          <IconSlot $ml={15}><HelpIcon /></IconSlot>
          <Item $w={12} />
        </IndicatorBar>
        <Plot><PriceChart /></Plot>
        <PanelHeader>
          <Item $w={29}>VOL</Item>
          <Caret $color="#fff" />
          <Item $ml={6}>(</Item>
          <Item $color="#cfcf35">5</Item>,
          <Item $color="#c424c4">10</Item>,
          <Item $color="#22b422">20</Item>)
          <Item $ml={7} $w={108}>VOL=386494640</Item>
          <Arrow dir="↓" />
          <Item $color="#cfcf35" $w={114}>,MA1=380989366</Item>
          <Arrow dir="↑" />
          <Item $color="#c424c4" $w={115}>,MA2=380352045</Item>
          <Arrow dir="↓" />
          <Item $color="#22b422" $w={115}>,MA3=403975166</Item>
          <Arrow dir="↓" />
          <HeaderIcons />
        </PanelHeader>
        <Plot><VolumeChart /></Plot>
        <PanelHeader $size={13.7}>
          <ScriptName>净买占比变色版[自编]</ScriptName>
          <Caret $ml={2} $color="#fff" />
          <Item $ml={5}>比值=-0.081</Item>
          <Arrow dir="↓" />
          <Item $color="#cfcf35">,2.5,</Item>
          <Item $color="#c424c4">0,</Item>
          <Item $color="#e8161b">-2.5,</Item>
          <Item $color="#a4a4a4">-5,</Item>
          <Item $color="#2aa8a8">-7.5</Item>
          <HeaderIcons />
        </PanelHeader>
        <Plot><RatioChart /></Plot>
        <Plot><DateAxis /></Plot>
        <BottomBar>
          <MenuGroup>
            <MenuTab $w={59}>指标<Caret $up /></MenuTab>
            <MenuTab $w={82}>VIP指标<Caret $up /></MenuTab>
            <MenuTab $w={59} $active>战法<Caret $up $color="#fff" /></MenuTab>
            <MenuTab $w={82}>VIP战法<Caret $up /></MenuTab>
            <MenuTab $w={60}>最近<Caret $up /></MenuTab>
          </MenuGroup>
          <svg width="6" height="12" viewBox="0 0 6 12" fill="#2c2e38"><path d="M0 0l6 6-6 6z" /></svg>
          <Item $ml={7} $w={45}>标准</Item>
          <Item $w={75}>深度分析</Item>
          <Item $w={75}>益盟经典</Item>
          <Item $w={75}>主力追踪</Item>
          <Item $w={75}>主力资金</Item>
          <Item $w={76}>资金方程</Item>
          <Item $w={41}>111</Item>
          <Item>222</Item>
          <Divider />
          <Item $ml={12} $w={83} $color="#1b95ea">保存战法</Item>
          <Item $w={41} $color="#1b95ea">设置</Item>
        </BottomBar>
      </ChartColumn>
      <Splitter $right>
        <DragDots $mt={196} $mb={121} />
        <SplitGrip $height={124} $pt={92} $fade="up">
          <SideArrow flip size={10} />
        </SplitGrip>
        <SplitGrip $height={126} $pt={23} $fade="down">
          <SideArrow size={10} />
        </SplitGrip>
        <DragDots $mt={122} $mb={0} />
      </Splitter>
      <Quote />

      <Tooltip>
        <TooltipTitle>
          2025/06/04 三
          <TooltipClose><CrossIcon /></TooltipClose>
        </TooltipTitle>
        {dayDetail.map(([label, value, up]) => (
          <TooltipRow key={label} $color={up ? '#e0586a' : undefined}>
            <TooltipLabel>{label}</TooltipLabel>
            {value}
          </TooltipRow>
        ))}
      </Tooltip>

      <Marks width="1869" height="901" viewBox="0 0 1869 901" fill={colors.mark}>
        <g stroke={colors.mark} strokeWidth="0.9">
          <path d="M926.5 406.5 1037.7 241 1031.7 238.3 1055 223 1049 250 1044.5 247.5z" />
          <path d="M900.5 565 1013.7 616.7 1017 611 1036 631 1008 630 1010.7 622.5z" />
        </g>
        <g fill="none" stroke={colors.mark} strokeWidth="3.4">
          <ellipse cx="982.2" cy="604.8" rx="46" ry="48" />
          <ellipse cx="997.8" cy="758.2" rx="60.8" ry="35.2" />
        </g>
      </Marks>
    </Screen>
  );
}
